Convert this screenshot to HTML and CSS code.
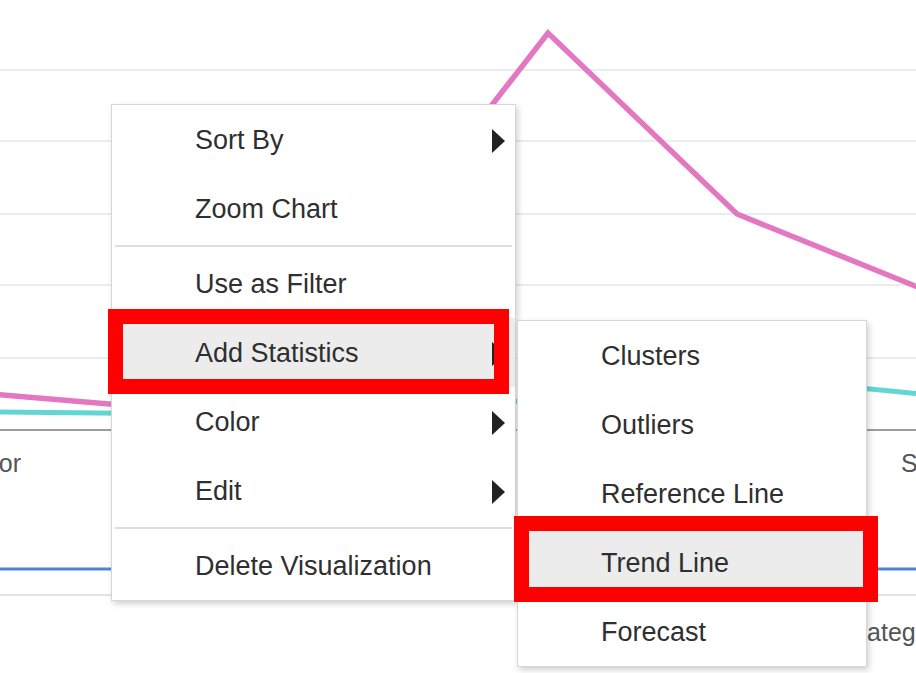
FILE: index.html
```html
<!DOCTYPE html>
<html>
<head>
<meta charset="utf-8">
<link rel="stylesheet" href="styles.css">
</head>
<body>
<div class="stage">
  <svg class="chart" width="916" height="673" viewBox="0 0 916 673" xmlns="http://www.w3.org/2000/svg">
    <g class="grid">
      <line x1="0" y1="70" x2="916" y2="70"/>
      <line x1="0" y1="141" x2="916" y2="141"/>
      <line x1="0" y1="214" x2="916" y2="214"/>
      <line x1="0" y1="285" x2="916" y2="285"/>
      <line x1="0" y1="358" x2="916" y2="358"/>
    </g>
    <line class="axis" x1="0" y1="430" x2="916" y2="430"/>
    <line class="blue" x1="0" y1="569" x2="916" y2="569"/>
    <line class="faint" x1="0" y1="595" x2="916" y2="595"/>
    <polyline class="pink" points="-10,394 250,416 548,33 737,214 930,292"/>
    <polyline class="teal" points="-10,412 200,414 860,388 930,395"/>
    <text class="tick" x="21" y="472" text-anchor="end">Sector</text>
    <text class="tick" x="901" y="472">Sector</text>
    <text class="tick" x="849" y="641">Category</text>
  </svg>

  <div class="menu main-menu">
    <div class="item"><span>Sort By</span><span class="arrow"></span></div>
    <div class="item"><span>Zoom Chart</span></div>
    <div class="sep"></div>
    <div class="item"><span>Use as Filter</span></div>
    <div class="item active"><span>Add Statistics</span><span class="arrow"></span></div>
    <div class="item"><span>Color</span><span class="arrow"></span></div>
    <div class="item"><span>Edit</span><span class="arrow"></span></div>
    <div class="sep"></div>
    <div class="item"><span>Delete Visualization</span></div>
  </div>

  <div class="menu sub-menu">
    <div class="item"><span>Clusters</span></div>
    <div class="item"><span>Outliers</span></div>
    <div class="item"><span>Reference Line</span></div>
    <div class="item active"><span>Trend Line</span></div>
    <div class="item"><span>Forecast</span></div>
  </div>

  <div class="mark mark-main"></div>
  <div class="mark mark-sub"></div>
</div>
</body>
</html>
```
FILE: styles.css
```css
html, body {
  margin: 0;
  padding: 0;
  background: #ffffff;
}

.stage {
  position: relative;
  width: 916px;
  height: 673px;
  overflow: hidden;
  font-family: "Liberation Sans", Arial, Helvetica, sans-serif;
}

.chart {
  display: block;
}

.grid line {
  stroke: #e9ecf0;
  stroke-width: 2;
}

.axis {
  stroke: #9c9c9c;
  stroke-width: 2;
}

.blue {
  stroke: #4a86d8;
  stroke-width: 3;
}

.faint {
  stroke: #e2e2e2;
  stroke-width: 2;
}

.pink {
  fill: none;
  stroke: #e377c2;
  stroke-width: 5.5;
  stroke-linejoin: miter;
}

.teal {
  fill: none;
  stroke: #62d6d2;
  stroke-width: 5;
}

.tick {
  font-family: "Liberation Sans", Arial, sans-serif;
  font-size: 25px;
  fill: #555555;
}

.menu {
  position: absolute;
  background: #ffffff;
  border: 1px solid #d6d6d6;
  box-shadow: 2px 3px 6px rgba(0, 0, 0, 0.18);
  display: flex;
  flex-direction: column;
  color: #2f2f2f;
  font-size: 27px;
}

.main-menu {
  left: 111px;
  top: 104px;
  width: 403px;
}

.sub-menu {
  left: 517px;
  top: 320px;
  width: 348px;
}

.item {
  height: 69px;
  box-sizing: border-box;
  display: flex;
  align-items: center;
  justify-content: space-between;
  padding: 2px 10px 0 83px;
  white-space: nowrap;
}

.item.active {
  background: #ececec;
}

.arrow {
  width: 0;
  height: 0;
  border-left: 13px solid #222222;
  border-top: 12px solid transparent;
  border-bottom: 12px solid transparent;
}

.sep {
  height: 2px;
  margin: 2px 3px;
  background: #dedede;
}

.mark {
  position: absolute;
  border: 15px solid #ff0000;
  box-sizing: border-box;
}

.mark-main {
  left: 108px;
  top: 309px;
  width: 401px;
  height: 85px;
}

.mark-sub {
  left: 514px;
  top: 516px;
  width: 364px;
  height: 86px;
}
```
